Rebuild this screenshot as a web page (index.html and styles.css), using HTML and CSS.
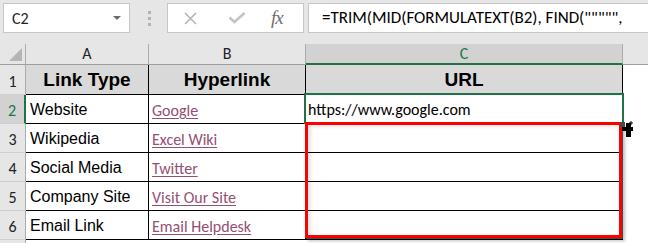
FILE: index.html
```html
<!DOCTYPE html>
<html>
    <head>
        <title>Excel - hyperlink URL</title>
        <link rel="stylesheet" href="styles.css">
    </head>
    <body>
        <div class="toolbar">
            <div class="namebox">
                <span>C2</span>
                <span class="caret"></span>
            </div>
            <div class="grip"><i></i><i></i><i></i></div>
            <div class="fxbtns">
                <svg class="ico-x" width="13" height="13" viewBox="0 0 13 13">
                    <path d="M1 1 L12 12 M12 1 L1 12" stroke="#b5b5b5" stroke-width="1.6" fill="none"/>
                </svg>
                <svg class="ico-ok" width="18" height="12" viewBox="0 0 18 12">
                    <path d="M1.5 5.5 L6.5 10 L16.5 1" stroke="#c3c3c3" stroke-width="2.6" fill="none"/>
                </svg>
                <span class="fx">fx</span>
            </div>
            <div class="formula">=TRIM(MID(FORMULATEXT(B2), FIND(""""",</div>
        </div>

        <div class="sheet">
            <div class="grid">
                <div class="corner"><span class="tri"></span></div>
                <div class="colhead">A</div>
                <div class="colhead">B</div>
                <div class="colhead sel">C</div>
                <div class="colhead rest"></div>

                <div class="rowhead">1</div>
                <div class="cell title">Link Type</div>
                <div class="cell title">Hyperlink</div>
                <div class="cell title">URL</div>
                <div class="blank"></div>

                <div class="rowhead sel">2</div>
                <div class="cell">Website</div>
                <div class="cell link"><a>Google</a></div>
                <div class="cell url">https://www.google.com</div>
                <div class="blank"></div>

                <div class="rowhead">3</div>
                <div class="cell">Wikipedia</div>
                <div class="cell link"><a>Excel Wiki</a></div>
                <div class="cell url"></div>
                <div class="blank"></div>

                <div class="rowhead">4</div>
                <div class="cell">Social Media</div>
                <div class="cell link"><a>Twitter</a></div>
                <div class="cell url"></div>
                <div class="blank"></div>

                <div class="rowhead">5</div>
                <div class="cell">Company Site</div>
                <div class="cell link"><a>Visit Our Site</a></div>
                <div class="cell url"></div>
                <div class="blank"></div>

                <div class="rowhead">6</div>
                <div class="cell">Email Link</div>
                <div class="cell link"><a>Email Helpdesk</a></div>
                <div class="cell url"></div>
                <div class="blank"></div>

                <div class="rowhead last"></div>
                <div class="blank"></div>
                <div class="blank"></div>
                <div class="blank"></div>
                <div class="blank"></div>
            </div>

            <!-- active cell + highlighted range -->
            <div class="selection"></div>
            <div class="marquee"></div>
            <svg class="cursor" width="14" height="16" viewBox="0 0 14 16">
                <rect x="0" y="1" width="5" height="5" fill="#4a4a4a"/>
                <path d="M6 2 h5 v4 h2 v4 h-2 v6 h-5 v-6 h-4 v-4 h4 z" fill="#000"/>
                <path d="M11 0 v4 M9 2 h4" stroke="#000" stroke-width="1" fill="none"/>
            </svg>
        </div>
    </body>
</html>
```

FILE: styles.css
```css
body {
    margin: 0;
    width: 648px;
    height: 243px;
    overflow: hidden;
    background: #fff;
    font-family: Calibri, Carlito, Lato, sans-serif;
    color: #000;
}

/* formula bar */
.toolbar {
    display: flex;
    align-items: flex-start;
    height: 44px;
    padding: 3px 0 0 3px;
    box-sizing: border-box;
    background: #e6e6e6;
}
.namebox {
    display: flex;
    align-items: center;
    justify-content: space-between;
    width: 127px;
    height: 30px;
    padding: 0 8px 0 8px;
    box-sizing: border-box;
    border: 1px solid #c6c6c6;
    background: #fff;
    font-size: 16px;
    color: #222;
}
.caret {
    width: 0;
    height: 0;
    border-left: 4px solid transparent;
    border-right: 4px solid transparent;
    border-top: 4px solid #6b6b6b;
}
.grip {
    display: flex;
    flex-direction: column;
    gap: 3px;
    margin: 8px 16px 0 18px;
}
.grip i {
    display: block;
    width: 3px;
    height: 3px;
    background: #b3b3b3;
}
.fxbtns {
    display: flex;
    align-items: center;
    width: 137px;
    height: 30px;
    box-sizing: border-box;
    border: 1px solid #c6c6c6;
    background: #fff;
}
.ico-x {
    margin-left: 16px;
}
.ico-ok {
    margin-left: 31px;
}
.fx {
    margin-left: 25px;
    font-family: "Liberation Serif", serif;
    font-style: italic;
    font-size: 19px;
    color: #6f6f6f;
    letter-spacing: -1px;
}
.formula {
    flex: 1;
    height: 30px;
    margin-left: 4px;
    padding-left: 13px;
    box-sizing: border-box;
    border: 1px solid #c6c6c6;
    border-right: none;
    background: #fff;
    font-size: 17px;
    line-height: 28px;
    white-space: nowrap;
    overflow: hidden;
}

/* worksheet */
.sheet {
    position: relative;
    height: 199px;
    overflow: hidden;
}
.grid {
    display: grid;
    grid-template-columns: 26px 123px 157px 317px 1fr;
    grid-template-rows: 21px 30px repeat(5, 29px) 1fr;
    height: 100%;
}
.grid > div {
    box-sizing: border-box;
}
.corner {
    position: relative;
    background: #e6e6e6;
    border-right: 1px solid #ababab;
    border-bottom: 1px solid #9e9e9e;
}
.tri {
    position: absolute;
    right: 3px;
    bottom: 3px;
    width: 0;
    height: 0;
    border-left: 13px solid transparent;
    border-bottom: 13px solid #b5b5b5;
}
.colhead {
    display: flex;
    align-items: flex-end;
    justify-content: center;
    padding-bottom: 1px;
    background: #e6e6e6;
    border-right: 1px solid #ababab;
    border-bottom: 1px solid #9e9e9e;
    font-size: 16px;
    color: #222;
}
.colhead.sel {
    background: #d2d2d2;
    color: #217346;
    border-bottom: 2px solid #217346;
    padding-bottom: 0;
}
.colhead.rest {
    border-right: none;
}
.rowhead {
    display: flex;
    align-items: flex-end;
    justify-content: center;
    padding-bottom: 3px;
    background: #e6e6e6;
    border-right: 1px solid #ababab;
    border-bottom: 1px solid #cfcfcf;
    font-size: 16px;
    color: #222;
}
.rowhead.sel {
    background: #d2d2d2;
    color: #217346;
    border-right: 2px solid #217346;
}
.rowhead.last {
    border-bottom: none;
}
.cell {
    display: flex;
    align-items: center;
    padding: 1px 0 0 4px;
    border-right: 1px solid #000;
    border-bottom: 1px solid #000;
    font-family: "Liberation Sans", Arial, sans-serif;
    font-size: 16px;
    white-space: nowrap;
}
.cell.title {
    justify-content: center;
    padding-left: 0;
    background: #d9d9d9;
    font-weight: bold;
    font-size: 19px;
}
.cell.link {
    padding-left: 3px;
    padding-top: 3px;
    font-family: Calibri, Carlito, Lato, sans-serif;
}
.cell.link a {
    color: #954f72;
    text-decoration: underline;
    text-underline-offset: 2px;
}
.cell.url {
    padding-left: 2px;
    font-family: Calibri, Carlito, Lato, sans-serif;
}
.blank {
    background: #fff;
}

.selection {
    position: absolute;
    left: 304px;
    top: 49px;
    width: 320px;
    height: 31px;
    box-sizing: border-box;
    border: 2px solid #217346;
}
.marquee {
    position: absolute;
    left: 305px;
    top: 78px;
    width: 317px;
    height: 116px;
    box-sizing: border-box;
    border: 3px solid #ff0000;
    box-shadow: 1px 1px 0 #4a4a4a, 3px 3px 3px rgba(0, 0, 0, .25), inset 4px 3px 4px -2px rgba(0, 0, 0, .15);
}
.cursor {
    position: absolute;
    left: 620px;
    top: 77px;
}
```
